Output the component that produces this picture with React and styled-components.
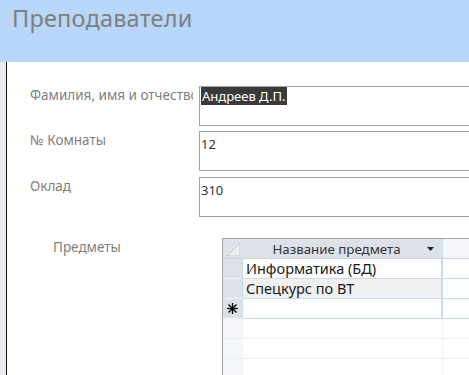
import React from "react";
import styled, { createGlobalStyle } from "styled-components";

const Global = createGlobalStyle`
  html, body { margin: 0; padding: 0; height: 100%; overflow: hidden; background: #fff; }
  #root { height: 100%; }
  * { box-sizing: border-box; }
`;

const Page = styled.div`
  height: 100%;
  display: flex;
  flex-direction: column;
  font-family: "Noto Sans", "Open Sans", sans-serif;
`;

const Header = styled.header`
  height: 62px;
  flex: none;
  background: #b8d6f9;
  padding: 2px 0 0 12px;
`;

const Title = styled.h1`
  margin: 0;
  font-weight: 400;
  font-size: 23.5px;
  line-height: 32px;
  color: #7f7f7f;
  letter-spacing: 0.2px;
`;

const Body = styled.div`
  flex: 1;
  display: flex;
  min-height: 0;
`;

const Strip = styled.div`
  width: 7px;
  flex: none;
  background: #e8ecf1;
  border-right: 1.5px solid #111;
`;

const Main = styled.main`
  flex: 1;
  min-width: 0;
  padding: 24px 0 0 23px;
  display: flex;
  flex-direction: column;
  gap: 5px;
  overflow: hidden;
`;

const Row = styled.div`
  display: flex;
  align-items: flex-start;
  margin-top: ${(p) => p.$mt || 0}px;
  padding-left: ${(p) => p.$indent || 0}px;
`;

const Label = styled.div`
  width: 169px;
  flex: none;
  font-size: 13.5px;
  line-height: 18px;
  color: #7f7f7f;
  white-space: nowrap;
  overflow: hidden;
  padding-right: 6px;
  & > span { display: block; overflow: hidden; }
`;

const Field = styled.div`
  flex: 1;
  height: 40px;
  border: 1px solid #a3a3a3;
  border-right: none;
  padding: ${(p) => p.$pt || 0}px 0 0 1px;
  font-size: 13px;
  line-height: 18px;
  color: #333;
`;

const Selected = styled.span`
  display: inline-block;
  background: #3a3a3a;
  color: #fff;
  padding: 0 2px 0 1px;
`;

const Grid = styled.div`
  flex: 1;
  border-left: 1.5px solid #a5a5a5;
  border-top: 1.5px solid #a5a5a5;
  display: grid;
  grid-template-columns: 19px 200px 1fr;
  grid-auto-rows: 20px;
  height: 140px;
`;

const Corner = styled.div`
  background: #dde2e8;
  border-bottom: 1px solid #d0d5db;
  display: flex;
  align-items: flex-end;
  justify-content: flex-end;
  padding: 0 2px 2px 0;
`;

const HeadCell = styled.div`
  background: ${(p) => (p.$blank ? "#f4f6fb" : "#dde2e8")};
  border-left: 1px solid ${(p) => (p.$blank ? "#c6dcf0" : "#dde2e8")};
  border-bottom: 1px solid #d0d5db;
  display: flex;
  align-items: center;
  justify-content: center;
  padding-right: 12px;
  position: relative;
  font-size: 13.3px;
  color: #333;
`;

const Arrow = styled.svg`
  position: absolute;
  right: 8px;
  top: 8px;
`;

const Selector = styled.div`
  background: ${(p) => (p.$empty ? "#f4f6fc" : "#dde2e8")};
  border-bottom: 1px solid ${(p) => (p.$empty ? "#e9eef6" : "#f2f4f6")};
  display: flex;
  align-items: center;
  justify-content: center;
`;

const Cell = styled.div`
  background: ${(p) => (p.$alt ? "#f0f0f0" : "#fff")};
  border-left: 1px solid ${(p) => (p.$empty ? "#eef3fa" : "#c6dcf0")};
  border-bottom: 1px solid ${(p) => (p.$empty ? "#e9eff8" : "#c6dcf0")};
  border-right: ${(p) => (p.$edge ? "1px solid #c6dcf0" : "none")};
  font-size: 14.5px;
  line-height: 19px;
  color: #1a1a1a;
  padding-left: 3px;
  white-space: nowrap;
`;

const Star = () => (
  <svg width="11" height="11" viewBox="0 0 11 11">
    <g stroke="#000" strokeWidth="1.3" strokeLinecap="square">
      <line x1="5.5" y1="0.5" x2="5.5" y2="10.5" />
      <line x1="0.5" y1="5.5" x2="10.5" y2="5.5" />
      <line x1="2" y1="2" x2="9" y2="9" />
      <line x1="9" y1="2" x2="2" y2="9" />
    </g>
  </svg>
);

const rows = [
  { text: "Информатика (БД)" },
  { text: "Спецкурс по ВТ", alt: true },
  { text: "", star: true },
];

export default function App() {
  return (
    <Page>
      <Global />
      <Header>
        <Title>Преподаватели</Title>
      </Header>
      <Body>
        <Strip />
        <Main>
          <Row>
            <Label><span>Фамилия, имя и отчество</span></Label>
            <Field>
              <Selected>Андреев Д.П.</Selected>
            </Field>
          </Row>
          <Row>
            <Label>№ Комнаты</Label>
            <Field $pt={3}>12</Field>
          </Row>
          <Row $mt={1}>
            <Label>Оклад</Label>
            <Field $pt={3}>310</Field>
          </Row>
          <Row $mt={16} $indent={23}>
            <Label>Предметы</Label>
            <Grid>
              <Corner>
                <svg width="13" height="13" viewBox="0 0 13 13">
                  <polygon points="13,0 13,13 0,13" fill="#eceef1" stroke="#c3c7cc" strokeWidth="1" />
                </svg>
              </Corner>
              <HeadCell>
                Название предмета
                <Arrow width="7" height="4" viewBox="0 0 7 4">
                  <polygon points="0,0 7,0 3.5,4" fill="#222" />
                </Arrow>
              </HeadCell>
              <HeadCell $blank />
              {rows.map((r, i) => (
                <React.Fragment key={i}>
                  <Selector>{r.star && <Star />}</Selector>
                  <Cell $alt={r.alt} $edge>{r.text}</Cell>
                  <Cell />
                </React.Fragment>
              ))}
              {[0, 1, 2].map((i) => (
                <React.Fragment key={"e" + i}>
                  <Selector $empty />
                  <Cell $empty />
                  <Cell $empty />
                </React.Fragment>
              ))}
            </Grid>
          </Row>
        </Main>
      </Body>
    </Page>
  );
}
